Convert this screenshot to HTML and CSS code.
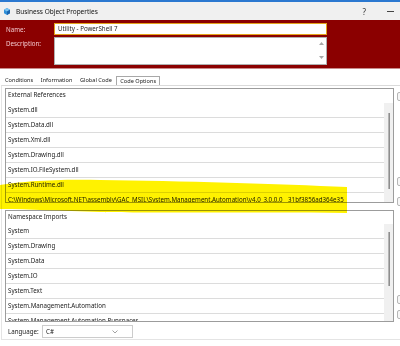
FILE: index.html
```html
<!DOCTYPE html>
<html lang="en">
<head>
  <meta charset="UTF-8">
  <meta name="viewport" content="width=device-width, initial-scale=1.0">
  <title>Business Object Properties</title>
  <link rel="stylesheet" href="styles.css">
</head>
<body>

  <div class="topline"></div>

  <div class="titlebar">
    <svg class="app-icon" viewBox="0 0 6 7">
      <polygon points="3,0 6,1.8 6,5.2 3,7 0,5.2 0,1.8" fill="#2f8fd8"/>
      <polygon points="3,0 6,1.8 3,3.6 0,1.8" fill="#7cc4f2"/>
      <polygon points="3,3.6 6,1.8 6,5.2 3,7" fill="#1a65b0"/>
    </svg>
    <span class="title">Business Object Properties</span>
    <span class="help">?</span>
    <span class="minimize"></span>
  </div>

  <div class="header">
    <div class="field">
      <label class="field-label">Name:</label>
      <div class="input name-input">Utility - PowerShell 7</div>
    </div>
    <div class="field">
      <label class="field-label">Description:</label>
      <div class="input desc-input">
        <div class="mini-scroll">
          <svg viewBox="0 0 5 3"><polygon points="0,3 2.5,0 5,3" fill="#a8a8a8"/></svg>
          <svg viewBox="0 0 5 3"><polygon points="0,0 5,0 2.5,3" fill="#a8a8a8"/></svg>
        </div>
      </div>
    </div>
  </div>

  <div class="tabs">
    <span class="tab">Conditions</span>
    <span class="tab">Information</span>
    <span class="tab">Global Code</span>
    <span class="tab active">Code Options</span>
  </div>

  <div class="tab-page">
    <div class="panel-row">
      <div class="panel refs">
        <div class="panel-list">
          <div class="panel-head">External References</div>
          <div class="item">System.dll</div>
          <div class="item">System.Data.dll</div>
          <div class="item">System.Xml.dll</div>
          <div class="item">System.Drawing.dll</div>
          <div class="item">System.IO.FileSystem.dll</div>
          <div class="item">System.Runtime.dll</div>
          <div class="item">C:\Windows\Microsoft.NET\assembly\GAC_MSIL\System.Management.Automation\v4.0_3.0.0.0__31bf3856ad364e35</div>
        </div>
        <div class="scrollbar">
          <div class="scroll-top"></div>
          <div class="thumb"></div>
        </div>
      </div>
      <div class="side">
        <span class="side-btn b1"></span>
        <span class="side-btn b2"></span>
        <span class="side-btn b3"></span>
      </div>
    </div>

    <div class="panel-row second">
      <div class="panel imports">
        <div class="panel-list">
          <div class="panel-head">Namespace Imports</div>
          <div class="item">System</div>
          <div class="item">System.Drawing</div>
          <div class="item">System.Data</div>
          <div class="item">System.IO</div>
          <div class="item">System.Text</div>
          <div class="item">System.Management.Automation</div>
          <div class="item">System.Management.Automation.Runspaces</div>
        </div>
        <div class="scrollbar">
          <div class="scroll-top"></div>
          <div class="thumb"></div>
        </div>
      </div>
      <div class="side">
        <span class="side-btn b4"></span>
        <span class="side-btn b5"></span>
      </div>
    </div>

    <div class="language">
      <label class="lang-label">Language:</label>
      <div class="select">
        <span>C#</span>
        <svg class="chevron" viewBox="0 0 6 4"><polyline points="0.5,0.5 3,3 5.5,0.5" fill="none" stroke="#8a8a8a" stroke-width="0.8"/></svg>
      </div>
    </div>
  </div>

  <!-- marker scribble drawn over the screenshot -->
  <svg class="marker" viewBox="0 0 400 346">
    <path d="M0,185 C20,182 50,179 100,180 C180,181 280,184 347,187 L347,213 C250,212 150,213 100,212 C60,211 30,209 0,209 Z" fill="#fff200"/>
  </svg>

</body>
</html>
```

FILE: styles.css
```css
* {
  box-sizing: border-box;
}

body {
  margin: 0;
  width: 400px;
  height: 346px;
  overflow: hidden;
  position: relative;
  background-color: #ffffff;
  font-family: "Noto Sans", "Open Sans", sans-serif;
  font-size: 6.2px;
  color: #1c1c1c;
}

.topline {
  height: 2px;
  background-color: #2b78d0;
}

.titlebar {
  height: 18px;
  background-color: #f0f0f0;
  display: flex;
  align-items: center;
  padding-left: 4px;
}

.app-icon {
  width: 6px;
  height: 7px;
  margin-right: 6px;
  flex-shrink: 0;
}

.title {
  font-size: 6.5px;
  color: #111111;
}

.help {
  margin-left: auto;
  margin-right: 21px;
  font-size: 8px;
  color: #333333;
}

.minimize {
  width: 7px;
  height: 1px;
  background-color: #444444;
  margin-right: 6px;
}

.header {
  height: 49px;
  background-color: #8b0000;
  border-bottom: 1px solid #c88a8a;
  padding: 3px 0 0 6px;
}

.field {
  display: flex;
  margin-bottom: 2px;
}

.field-label {
  width: 48px;
  color: #f2c6cc;
  padding-top: 2px;
}

.input {
  width: 273px;
  background-color: #ffffff;
}

.name-input {
  height: 12px;
  border: 1px solid #e3a21a;
  padding-left: 3px;
  line-height: 10px;
}

.desc-input {
  height: 28px;
  border: 1px solid #b0b0b0;
  display: flex;
  justify-content: flex-end;
}

.mini-scroll {
  width: 9px;
  display: flex;
  flex-direction: column;
  justify-content: space-between;
  align-items: center;
  padding: 4px 0 5px;
}

.mini-scroll svg {
  width: 5px;
  height: 3px;
}

.tabs {
  display: flex;
  height: 9px;
  margin-top: 7px;
  padding-left: 2px;
  font-size: 5.6px;
}

.tab {
  padding: 0 3px;
  line-height: 9px;
  margin-right: 1.5px;
}

.tab.active {
  border: 1px solid #a8a8a8;
  border-bottom: none;
  line-height: 8px;
  padding: 0 3px;
  background-color: #ffffff;
}

.tab-page {
  height: 255px;
  margin-left: 1px;
  border-top: 1px solid #dadada;
  border-left: 1px solid #e4e4e4;
  border-bottom: 1px solid #e4e4e4;
  padding: 2px 0 0 3px;
}

.panel-row {
  display: flex;
}

.panel-row.second {
  margin-top: 4px;
}

.panel {
  width: 389px;
  flex-shrink: 0;
  display: flex;
  border: 1px solid #9c9c9c;
}

.refs {
  height: 115px;
}

.imports {
  height: 112px;
}

.panel-list {
  flex: 1;
  min-width: 0;
  overflow: hidden;
}

.panel-head {
  height: 14px;
  line-height: 12px;
  padding-left: 2px;
  white-space: nowrap;
}

.imports .panel-head {
  height: 13px;
}

.item {
  height: 15px;
  line-height: 14px;
  padding-left: 2px;
  border-bottom: 1px solid #dcdcdc;
  white-space: nowrap;
}

.scrollbar {
  width: 9px;
  flex-shrink: 0;
  background-color: #f0f0f0;
  display: flex;
  flex-direction: column;
}

.scroll-top {
  height: 14px;
  background-color: #ffffff;
}

.imports .scroll-top {
  height: 13px;
}

.thumb {
  width: 2px;
  margin-left: 4px;
  background-color: #8e8e8e;
  border-left: 1px solid #b4b4b4;
}

.refs .thumb {
  margin-top: 10px;
  height: 76px;
}

.imports .thumb {
  margin-top: 8px;
  height: 54px;
}

.side {
  display: flex;
  flex-direction: column;
  flex-shrink: 0;
  margin-left: 3px;
}

.side-btn {
  display: block;
  width: 12px;
  height: 9px;
  border: 1px solid #b6b6b6;
  border-radius: 2px;
  background-color: #f6f6f6;
}

.b1 {
  margin-top: 4px;
}

.b2 {
  margin-top: 76px;
}

.b3 {
  margin-top: 11px;
}

.b4 {
  margin-top: 85px;
}

.b5 {
  margin-top: 6px;
}

.language {
  display: flex;
  align-items: center;
  padding: 3px 0 0 3px;
}

.lang-label {
  width: 34px;
}

.select {
  width: 91px;
  height: 13px;
  border: 1px solid #cccccc;
  display: flex;
  align-items: center;
  padding-left: 3px;
}

.chevron {
  width: 6px;
  height: 4px;
  margin-left: 58px;
}

.marker {
  position: absolute;
  left: 0;
  top: 0;
  width: 400px;
  height: 346px;
  mix-blend-mode: multiply;
  pointer-events: none;
}
```
